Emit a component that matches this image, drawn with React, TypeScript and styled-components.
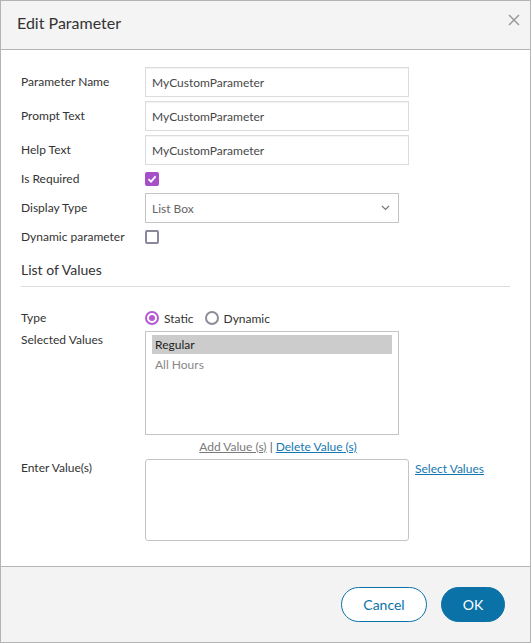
import styled, { createGlobalStyle } from "styled-components";

const GlobalStyle = createGlobalStyle`
    html, body {
        margin: 0;
        padding: 0;
        background: #fff;
    }
    * {
        box-sizing: border-box;
    }
`;

const Dialog = styled.div`
    width: 531px;
    height: 643px;
    border: 1px solid #b4b4b4;
    display: flex;
    flex-direction: column;
    font-family: "Lato", "Liberation Sans", sans-serif;
    color: #333;
    background: #fff;
`;

const Header = styled.div`
    height: 49px;
    flex: none;
    background: #f4f4f4;
    border-bottom: 1px solid #b4b4b4;
    display: flex;
    align-items: flex-start;
    justify-content: space-between;
    padding: 12px 10px 0 16px;
`;

const Title = styled.div`
    font-size: 16px;
    line-height: 20px;
    color: #333;
`;

const Close = styled.button`
    border: none;
    background: none;
    padding: 0;
    margin-top: 1px;
    width: 12px;
    height: 12px;
    cursor: pointer;
    display: flex;
`;

const Body = styled.div`
    flex: 1;
    padding: 17px 20px 0 20px;
`;

const Row = styled.div<{ $h: number; $top?: boolean; $gap?: number }>`
    display: flex;
    align-items: ${(p) => (p.$top ? "flex-start" : "center")};
    height: ${(p) => p.$h}px;
    margin-bottom: ${(p) => p.$gap ?? 4}px;
`;

const Label = styled.div<{ $pad?: number }>`
    width: 124px;
    flex: none;
    font-size: 12px;
    line-height: 16px;
    color: #333;
    padding-top: ${(p) => p.$pad ?? 0}px;
`;

const Input = styled.input`
    width: 264px;
    height: 30px;
    border: 1px solid #dcdcdc;
    box-shadow: inset 0 1px 1px rgba(0, 0, 0, 0.05);
    padding: 0 6px;
    font-family: inherit;
    font-size: 12px;
    color: #484848;
    outline: none;
`;

const SelectBox = styled.div`
    width: 254px;
    height: 30px;
    border: 1px solid #c4c4c4;
    display: flex;
    align-items: center;
    justify-content: space-between;
    padding: 0 8px 0 6px;
    font-size: 12px;
    color: #666;
`;

const Check = styled.span<{ $on?: boolean }>`
    width: 14px;
    height: 14px;
    border-radius: 2px;
    display: inline-flex;
    align-items: center;
    justify-content: center;
    background: ${(p) => (p.$on ? "#a74fc8" : "#fff")};
    border: ${(p) => (p.$on ? "none" : "2px solid #8b889c")};
`;

const Section = styled.div`
    margin-top: 13px;
    padding-bottom: 6px;
    border-bottom: 1px solid #dcdcdc;
    font-size: 14px;
    line-height: 20px;
    color: #333;
    margin-bottom: 21px;
`;

const Radios = styled.div`
    display: flex;
    align-items: center;
    font-size: 12px;
    color: #333;
`;

const RadioItem = styled.label`
    display: inline-flex;
    align-items: center;
    gap: 5px;
    margin-right: 11px;
`;

const Radio = styled.span<{ $on?: boolean }>`
    width: 14px;
    height: 14px;
    border-radius: 50%;
    border: 2px solid ${(p) => (p.$on ? "#b45ad2" : "#8d8d98")};
    display: inline-flex;
    align-items: center;
    justify-content: center;
    &::after {
        content: "";
        width: 6px;
        height: 6px;
        border-radius: 50%;
        background: ${(p) => (p.$on ? "#b45ad2" : "transparent")};
    }
`;

const ListBox = styled.div`
    width: 254px;
    height: 104px;
    border: 1px solid #c4c4c4;
    padding: 3px 6px;
`;

const Option = styled.div<{ $sel?: boolean }>`
    height: 19px;
    line-height: 19px;
    padding-left: 3px;
    font-size: 12px;
    color: ${(p) => (p.$sel ? "#222" : "#888")};
    background: ${(p) => (p.$sel ? "#cccccc" : "transparent")};
    margin-bottom: 1px;
`;

const Links = styled.div`
    width: 264px;
    margin-left: 124px;
    text-align: center;
    font-size: 12px;
    line-height: 16px;
    color: #555;
    margin-top: 4px;
    margin-bottom: 4px;
    padding-left: 2px;
`;

const Link = styled.a<{ $muted?: boolean }>`
    color: ${(p) => (p.$muted ? "#7a7a7a" : "#1677b0")};
    text-decoration: underline;
    cursor: pointer;
`;

const TextArea = styled.textarea`
    width: 264px;
    height: 82px;
    border: 1px solid #c4c4c4;
    border-radius: 3px;
    resize: none;
    font-family: inherit;
    outline: none;
`;

const SideLink = styled(Link)`
    font-size: 12px;
    margin-left: 6px;
    margin-top: 2px;
`;

const Footer = styled.div`
    height: 76px;
    flex: none;
    background: #f3f3f3;
    border-top: 1px solid #b4b4b4;
    display: flex;
    align-items: center;
    justify-content: flex-end;
    gap: 14px;
    padding-right: 25px;
`;

const Button = styled.button<{ $primary?: boolean }>`
    height: 35px;
    min-width: ${(p) => (p.$primary ? 64 : 86)}px;
    border-radius: 18px;
    border: 1px solid #0b72a8;
    background: ${(p) => (p.$primary ? "#0b72a8" : "#fff")};
    color: ${(p) => (p.$primary ? "#fff" : "#0b72a8")};
    font-family: inherit;
    font-size: 14px;
    cursor: pointer;
`;

const CheckMark = () => (
    <svg width="10" height="10" viewBox="0 0 10 10">
        <path d="M1.5 5.2 L4 7.6 L8.6 2.4" fill="none" stroke="#fff" strokeWidth="1.8" />
    </svg>
);

export default function App() {
    return (
        <>
            <GlobalStyle />
            <Dialog>
                <Header>
                    <Title>Edit Parameter</Title>
                    <Close aria-label="close">
                        <svg width="12" height="12" viewBox="0 0 12 12">
                            <path d="M1 1 L11 11 M11 1 L1 11" stroke="#9a9a9a" strokeWidth="1.5" />
                        </svg>
                    </Close>
                </Header>
                <Body>
                    <Row $h={30}>
                        <Label>Parameter Name</Label>
                        <Input defaultValue="MyCustomParameter" />
                    </Row>
                    <Row $h={30}>
                        <Label>Prompt Text</Label>
                        <Input defaultValue="MyCustomParameter" />
                    </Row>
                    <Row $h={30}>
                        <Label>Help Text</Label>
                        <Input defaultValue="MyCustomParameter" />
                    </Row>
                    <Row $h={20}>
                        <Label>Is Required</Label>
                        <Check $on>
                            <CheckMark />
                        </Check>
                    </Row>
                    <Row $h={30}>
                        <Label>Display Type</Label>
                        <SelectBox>
                            List Box
                            <svg width="9" height="6" viewBox="0 0 9 6">
                                <path d="M1 1 L4.5 4.5 L8 1" fill="none" stroke="#777" strokeWidth="1.2" />
                            </svg>
                        </SelectBox>
                    </Row>
                    <Row $h={20}>
                        <Label>Dynamic parameter</Label>
                        <Check />
                    </Row>
                    <Section>List of Values</Section>
                    <Row $h={20} $gap={3}>
                        <Label>Type</Label>
                        <Radios>
                            <RadioItem>
                                <Radio $on />
                                Static
                            </RadioItem>
                            <RadioItem>
                                <Radio />
                                Dynamic
                            </RadioItem>
                        </Radios>
                    </Row>
                    <Row $h={104} $top $gap={0}>
                        <Label $pad={1}>Selected Values</Label>
                        <ListBox>
                            <Option $sel>Regular</Option>
                            <Option>All Hours</Option>
                        </ListBox>
                    </Row>
                    <Links>
                        <Link $muted>Add Value (s)</Link> | <Link>Delete Value (s)</Link>
                    </Links>
                    <Row $h={82} $top>
                        <Label $pad={1}>Enter Value(s)</Label>
                        <TextArea />
                        <SideLink>Select Values</SideLink>
                    </Row>
                </Body>
                <Footer>
                    <Button>Cancel</Button>
                    <Button $primary>OK</Button>
                </Footer>
            </Dialog>
        </>
    );
}
